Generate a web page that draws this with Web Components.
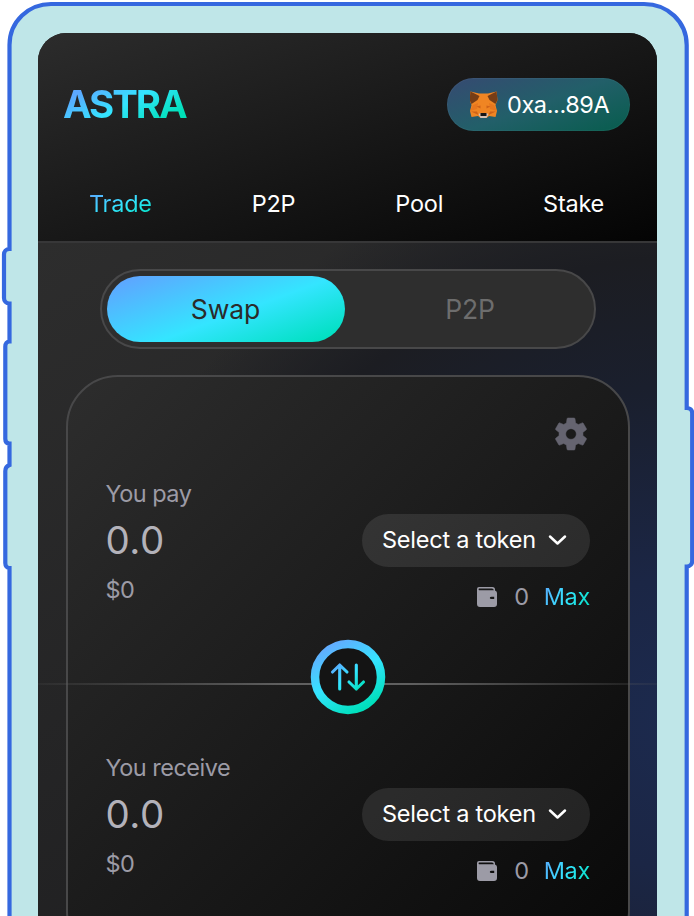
<!DOCTYPE html>
<html lang="en">
<head>
<meta charset="utf-8">
<title>Astra</title>
<style>
html,body{margin:0;height:916px;overflow:hidden;background:#fff;font-family:Inter,"Liberation Sans",sans-serif;
--accent:linear-gradient(160deg,#5ca8ff 8%,#34e5ff 55%,#00e0c0 94%)}
</style>
</head>
<body>
<astra-app></astra-app>
<script>
function define(name, html) {
  const t = document.createElement('template');
  t.innerHTML = html;
  customElements.define(name, class extends HTMLElement {
    constructor() {
      super();
      this.attachShadow({mode: 'open'}).append(t.content.cloneNode(true));
    }
  });
}

define('phone-frame', `
<style>
:host{display:grid;width:694px;height:916px;overflow:hidden}
svg,.screen{grid-area:1/1}
.screen{margin:33px 37px 0 38px;border-radius:28px 28px 0 0;overflow:hidden;background:#222;display:flex;flex-direction:column;min-height:0;min-width:0}
</style>
<svg width="694" height="916" viewBox="0 0 694 916">
<path fill="#bfe6e8" stroke="#3568df" stroke-width="4.2" d="M9.500 930V568C7 568 5.300 566 5.300 563V471C5.300 468 7 466 9.500 465V443.500C7 443.500 5.300 442 5.300 439V346.500C5.300 343.500 7 341.500 9.500 341.500V303.500C6 303.500 4 301 4 298V254.500C4 251.500 6 249 9.500 249V45C9.500 21 29 4 51 4H644C668 4 686.700 22 686.700 45V408C690 408 692.200 410 692.200 413V561C692.200 564 690 566.500 686.700 566.500V930Z"/>
</svg>
<div class="screen"><slot></slot></div>`);

define('fox-icon', `
<style>:host{display:block;width:28px;height:28px}svg{display:block}</style>
<svg width="28" height="28" viewBox="0 0 28 28">
<path fill="#f08523" d="M.5.500 9 2.500H18L26.500.500 27.500 9 25.500 14 27 20 25.500 26 19 25 16.500 27H10.500L8 25 1.500 26 0 20 1.500 14-.5 9Z"/>
<path fill="#763d16" d="M.5.500 9.500 5 7.500 9 1.500 13-.5 9ZM26.500.500 17.500 5 19.500 9 25.500 13 27.500 9Z"/>
<path fill="#e8771e" d="M3 14 8 12 7 18 0 20ZM24 14 19 12 20 18 27 20Z"/>
<path fill="#cf6318" d="M6.500 15.500 10.500 14.500 10.500 17.500ZM20.500 15.500 16.500 14.500 16.500 17.500ZM1 20.500H7L8.500 24ZM26 20.500H20L18.500 24Z"/>
<path fill="#d7c1b3" d="M8.500 23 11 22H16L18.500 23 16.500 27H10.500Z"/><path fill="#161616" d="M10.500 22H16.500V25H10.500Z"/>
</svg>`);

define('astra-logo', `
<style>
:host{display:block;width:134px;height:50px;padding-top:1px}
span{display:inline-block;padding:0 6px 0 5px;font-size:38.500px;line-height:50px;font-weight:700;letter-spacing:-2.100px;white-space:nowrap;
background:linear-gradient(150deg,#5ca8ff 20%,#34e5ff 50%,#00e0b8 82%);-webkit-background-clip:text;background-clip:text;color:transparent}
</style><span>ASTRA</span>`);

define('wallet-pill', `
<style>
:host{display:flex;align-items:center;gap:9px;box-sizing:border-box;width:183px;height:53px;padding-left:23px;border-radius:27px;color:#fff;font-size:23.500px;letter-spacing:-.4px;
background:linear-gradient(160deg,#334d70 8%,#225f69 50%,#0a5d50 94%);box-shadow:inset 0 0 0 1px #ffffff0a;white-space:nowrap}
</style><fox-icon></fox-icon><span><slot></slot></span>`);

define('nav-link', `
<style>
:host{display:block;color:#fff;font-size:23.500px;line-height:30px;letter-spacing:-.25px}
:host([active]) span{background:var(--accent);-webkit-background-clip:text;background-clip:text;color:transparent}
</style><span><slot></slot></span>`);

define('app-header', `
<style>
:host{display:flex;flex-direction:column;box-sizing:border-box;height:210px;flex:none;border-bottom:2px solid #373738;background:linear-gradient(161deg,#2c2c2c,#040404)}
.top{display:flex;justify-content:space-between;padding:45px 27px 0 20px;height:53px}
nav{display:flex;justify-content:space-between;padding:58px 53px 0 51px}
</style>
<div class="top"><astra-logo></astra-logo><wallet-pill>0xa...89A</wallet-pill></div>
<nav><nav-link active>Trade</nav-link><nav-link>P2P</nav-link><nav-link>Pool</nav-link><nav-link>Stake</nav-link></nav>`);

define('mode-switch', `
<style>
:host{display:grid;grid-template-columns:238px 1fr;box-sizing:border-box;width:496px;height:80px;padding:5px;border:2px solid #484849;border-radius:40px;background:#2e2e2e;font-size:26.500px;letter-spacing:-.1px}
span{display:flex;align-items:center;justify-content:center;color:#6d6d6d}
span:last-child{padding-left:7px}
.on{background:var(--accent);border-radius:33px;color:#2b2b2b}
</style><span class="on">Swap</span><span>P2P</span>`);

define('token-select', `
<style>
:host{display:flex;align-items:center;gap:11px;box-sizing:border-box;width:228px;height:53px;padding:0 0 0 20px;border-radius:27px;background:#ffffff18;color:#fff;font-size:23.500px;letter-spacing:-.24px;white-space:nowrap}
</style><span><slot></slot></span>
<svg width="20" height="14" viewBox="0 0 20 14" fill="none" stroke="#fff" stroke-width="2.500" stroke-linecap="round" stroke-linejoin="round"><path d="M3 3.500 10.500 10.500 18 3.500"/></svg>`);

define('balance-row', `
<style>
:host{display:flex;align-items:center;justify-content:flex-end;font-size:23.500px;line-height:30px;color:#9c9ba6}
svg{margin-right:16px}b{font-weight:400;letter-spacing:-.3px;margin-left:15px;background:linear-gradient(115deg,#5ca8ff,#34e5ff 50%,#00e0c0);-webkit-background-clip:text;background-clip:text;color:transparent}
</style>
<svg width="22" height="22" viewBox="0 0 22 22"><path fill="#9c9ba6" fill-rule="evenodd" d="M3 1H16.500Q19 1 19 3.500V4.500Q21 5 21 7V18Q21 21 18 21H4Q1 21 1 18V3Q1 1 3 1ZM3 2.600Q2 3.300 3 4.200H17.800Q17.500 2.600 16 2.600ZM15.500 10.700Q13.800 10.700 13.800 12 13.800 13 15.500 13H18.200V10.700Z"/></svg>
<span>0</span><b>Max</b>`);

define('token-panel', `
<style>
:host{display:flex;justify-content:space-between;height:130px;color:#9c9ba6;font-size:23.500px;line-height:30px;letter-spacing:-.5px;white-space:nowrap}
.amount{font-size:38.500px;line-height:46px;letter-spacing:.5px;color:#b3b2ba;margin:8px 0 12px}
.right{padding-top:34.500px;margin-right:-.5px}balance-row{margin-top:15px}
</style>
<div><div><slot></slot></div><div class="amount">0.0</div><div>$0</div></div>
<div class="right"><token-select>Select a token</token-select><balance-row></balance-row></div>`);

define('swap-button', `
<style>:host{display:block;width:76px;height:76px}svg{display:block}</style>
<svg width="76" height="76" viewBox="0 0 76 76" fill="none">
<defs><linearGradient id="r" gradientUnits="userSpaceOnUse" x1="20" y1="6" x2="55" y2="68"><stop stop-color="#62acff"/><stop offset=".5" stop-color="#35e4ff"/><stop offset="1" stop-color="#00e0bd"/></linearGradient>
<linearGradient id="a" gradientUnits="userSpaceOnUse" x1="26" y1="24" x2="50" y2="52"><stop stop-color="#5ca8ff"/><stop offset=".5" stop-color="#34e5ff"/><stop offset="1" stop-color="#00e0bd"/></linearGradient></defs>
<circle cx="38" cy="38" r="33" fill="#141414" stroke="url(#r)" stroke-width="8.500"/>
<path d="M29.700 50V26M22.500 33 29.700 26 37 33M46.300 26V50M39 43 46.300 50 53.500 43" stroke="url(#a)" stroke-width="3.100" stroke-linecap="round" stroke-linejoin="round"/>
</svg>`);

define('settings-icon', `
<style>:host{display:block;width:40px;height:40px}svg{display:block}</style>
<svg width="40" height="40" viewBox="0 0 24 24"><path fill="#656470" stroke="#656470" stroke-width=".3" stroke-linejoin="round" d="M19.140 12.940c.04-.3.06-.61.06-.94 0-.32-.02-.64-.07-.94l2.030-1.580c.18-.14.23-.41.120-.61l-1.920-3.320c-.12-.22-.37-.29-.59-.22l-2.390.96c-.5-.38-1.030-.7-1.620-.94L14.400 2.810c-.04-.24-.24-.41-.48-.41h-3.840c-.24 0-.43.17-.47.41L9.250 5.350c-.59.24-1.130.57-1.620.94L5.240 5.330c-.22-.08-.47 0-.59.22L2.740 8.870c-.12.21-.08.47.12.61l2.030 1.580c-.05.3-.09.63-.09.94s.02.64.07.94l-2.030 1.580c-.18.14-.23.41-.12.61l1.920 3.320c.12.22.37.29.59.22l2.390-.96c.5.38 1.030.7 1.620.94l.36 2.540c.05.24.24.41.48.41h3.840c.24 0 .44-.17.47-.41l.36-2.540c.59-.24 1.130-.56 1.620-.94l2.390.96c.22.08.47 0 .59-.22l1.920-3.320c.12-.22.07-.47-.12-.61l-2.010-1.580ZM12 15.200a3.200 3.200 0 1 1 0-6.400 3.200 3.200 0 0 1 0 6.400Z"/></svg>`);

define('swap-divider', `
<style>
:host{display:grid;align-items:center;justify-items:center;height:76px;margin:0 -68px;}
i,swap-button{grid-area:1/1}
i{width:619px;height:2px;margin-top:13px;background:linear-gradient(90deg,#60606020,#606060 40%,#606060 60%,#60606020)}
</style><i></i><swap-button></swap-button>`);

define('swap-card', `
<style>
:host{display:block;box-sizing:border-box;width:564px;height:588px;padding:37px 38px;border:2px solid #484849;border-radius:52px;
background:linear-gradient(135deg,#2d2d2d,#080808) padding-box}
.tools{display:flex;justify-content:flex-end;height:65px;margin-right:-1px}
swap-divider{margin-top:30px;margin-bottom:38px}
</style>
<div class="tools"><settings-icon></settings-icon></div>
<token-panel>You pay</token-panel>
<swap-divider></swap-divider>
<token-panel>You receive</token-panel>`);

define('astra-app', `
<style>
:host{display:block}
main{flex:1;display:flex;flex-direction:column;align-items:center;min-height:0;padding-top:26px;background:radial-gradient(ellipse 600px 580px at 640px 480px,#1c2a4e,#1b2645 25%,#1a1f2d 58%,#1c1d22 80%,#1f202200),linear-gradient(150deg,#2d2d2d,#1c1c1e)}
swap-card{margin-top:26px;flex:none}
mode-switch{flex:none}
</style>
<phone-frame><app-header></app-header><main><mode-switch></mode-switch><swap-card></swap-card></main></phone-frame>`);
</script>
</body>
</html>
